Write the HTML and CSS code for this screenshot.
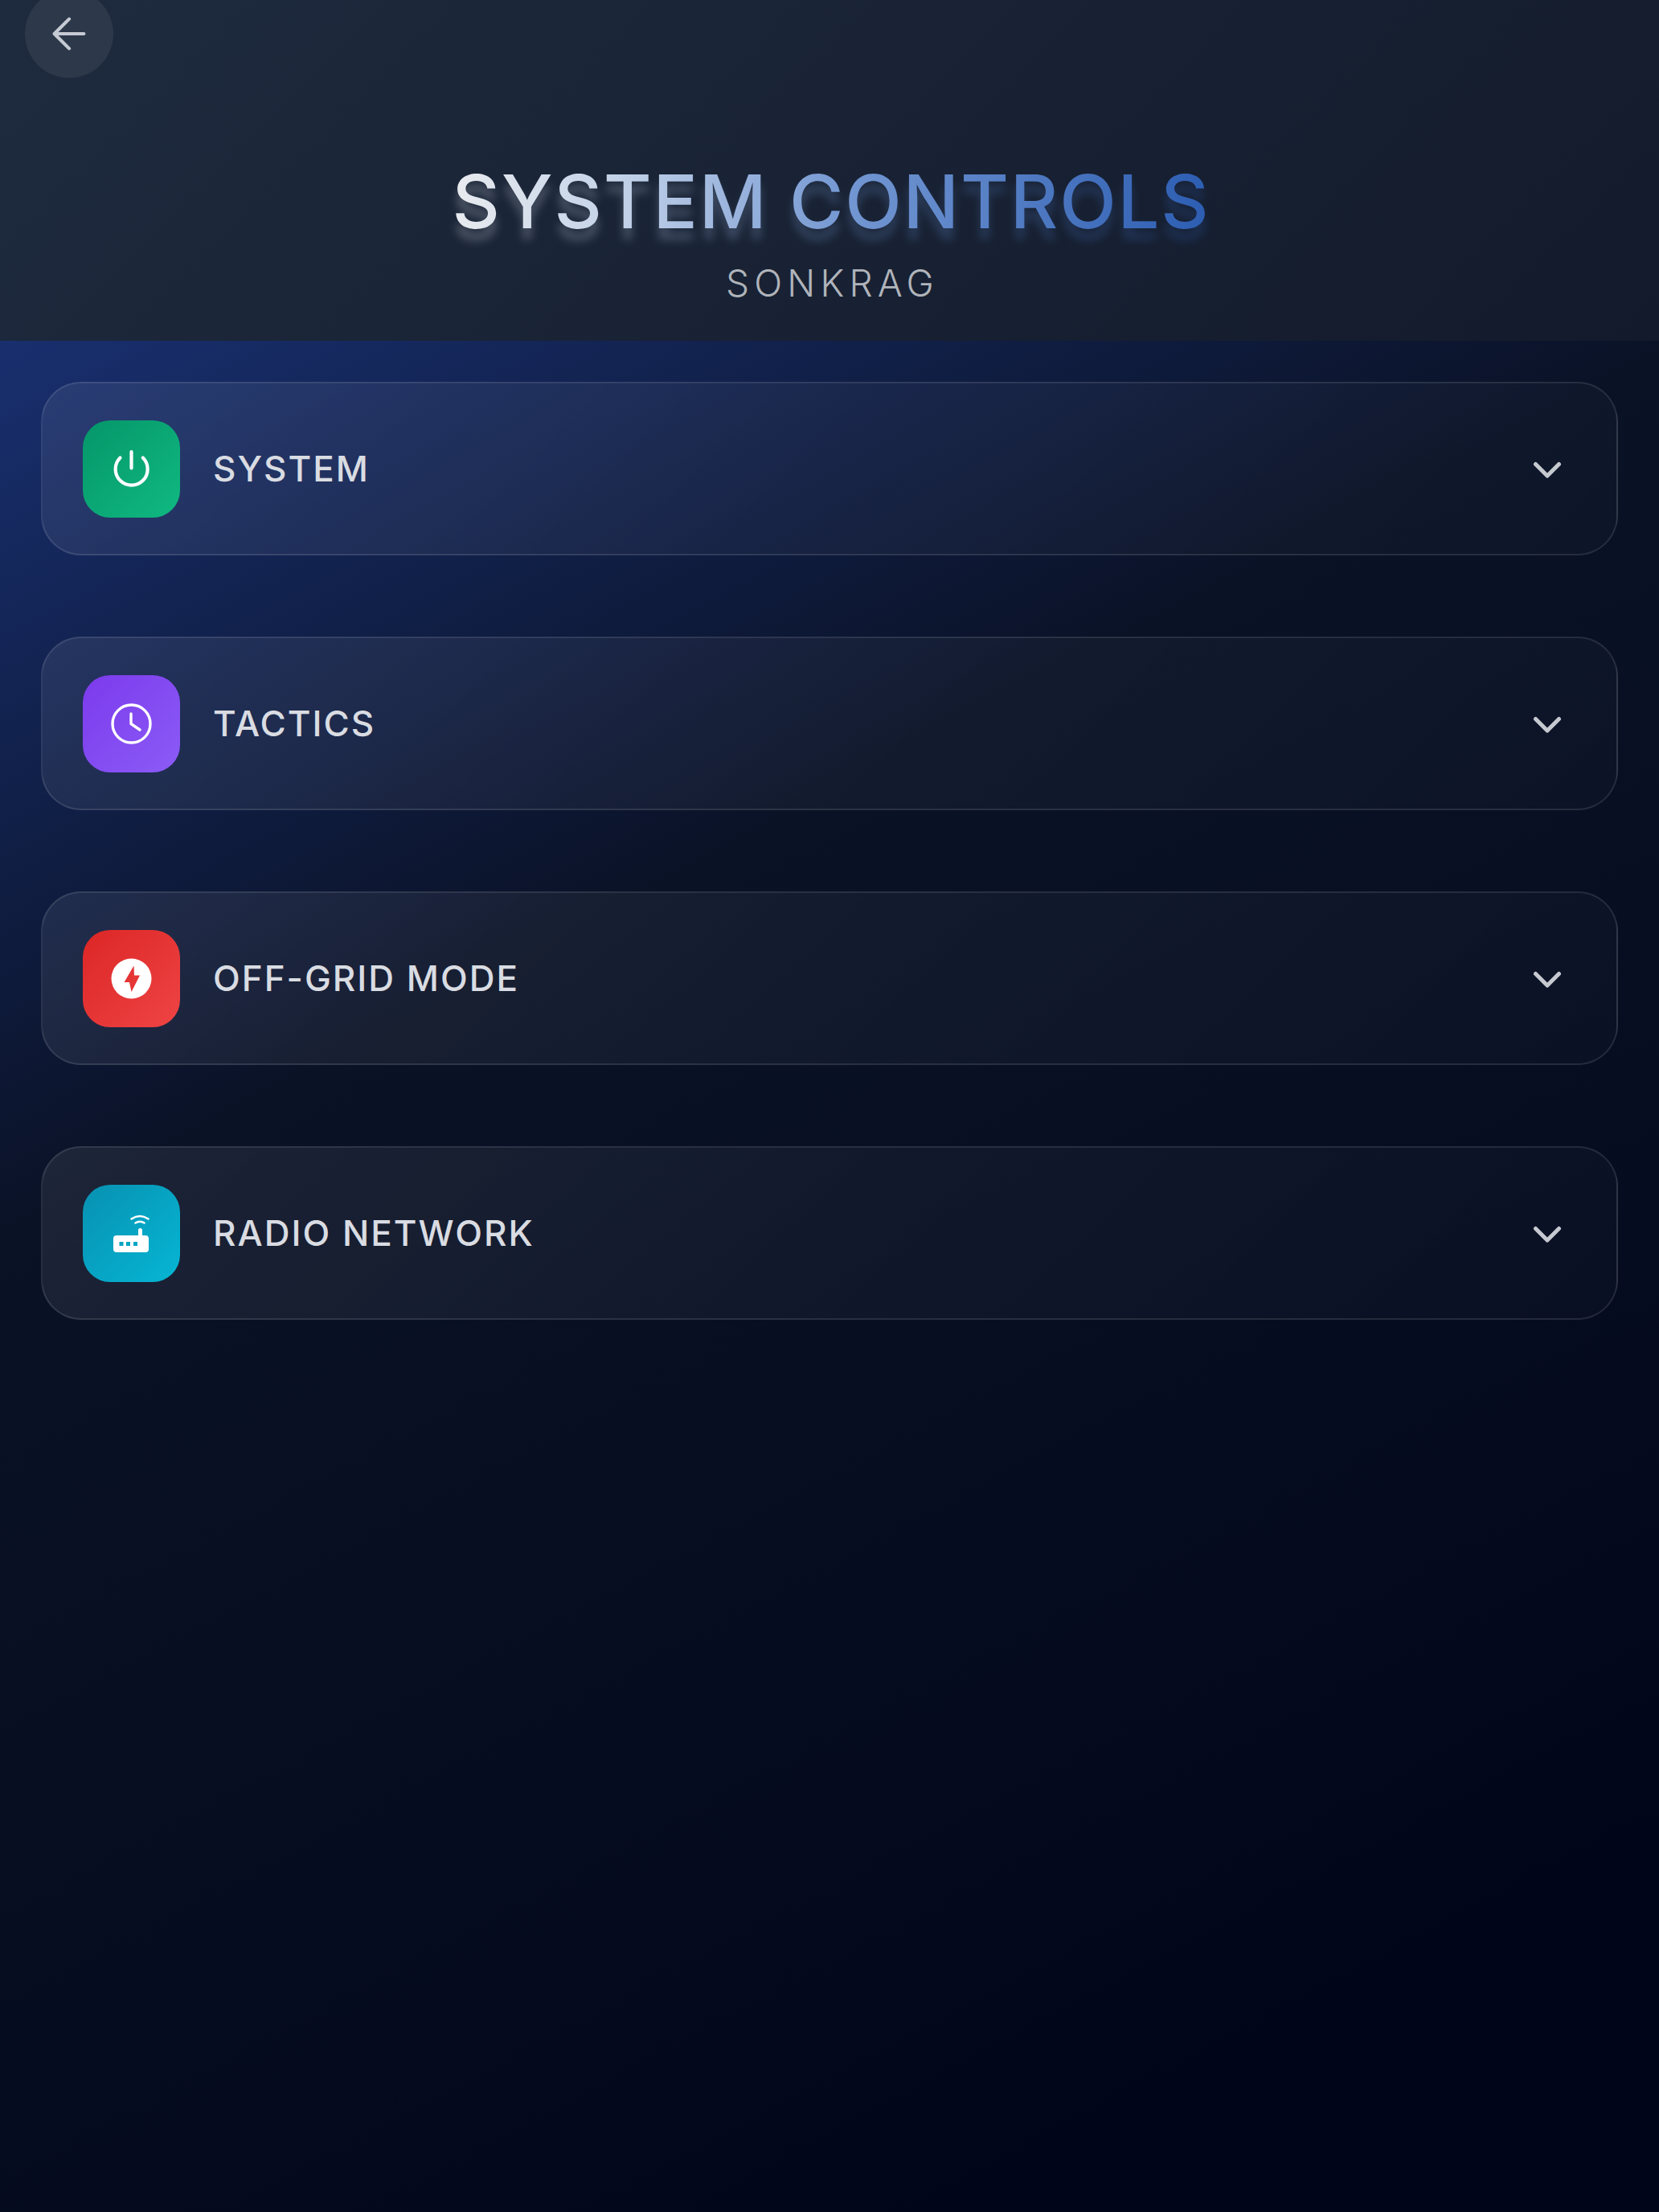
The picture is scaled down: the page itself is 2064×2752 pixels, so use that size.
FILE: index.html
```html
<!DOCTYPE html>
<html lang="en">
<head>
<meta charset="utf-8">
<title>System Controls</title>
<link rel="stylesheet" href="styles.css">
</head>
<body>
<div class="page">
  <header class="header">
    <button class="back" aria-label="Back">
      <svg viewBox="0 0 40 40" class="back-icon"><path d="M37.5 20H2.5M20 2.500 2.500 20 20 37.5"/></svg>
    </button>
    <h1 class="title" data-text="SYSTEM CONTROLS"><span class="title-text">SYSTEM CONTROLS</span></h1>
    <p class="subtitle">SONKRAG</p>
  </header>
  <main class="list">
    <section class="card">
      <div class="tile tile-green">
        <svg viewBox="0 0 121 121" class="glyph"><path class="line" d="M74.800 46.500a20 20 0 1 1-28.300 0M60.500 39V59.500"/></svg>
      </div>
      <span class="label">SYSTEM</span>
      <svg viewBox="0 0 36 22" class="chevron"><path d="M3.500 3.500 18 18 32.500 3.500"/></svg>
    </section>
    <section class="card">
      <div class="tile tile-purple">
        <svg viewBox="0 0 121 121" class="glyph"><circle class="line thin" cx="60.500" cy="60.500" r="23.500"/><path class="line thin" d="M60 48V60.500L71 68"/></svg>
      </div>
      <span class="label">TACTICS</span>
      <svg viewBox="0 0 36 22" class="chevron"><path d="M3.500 3.500 18 18 32.500 3.500"/></svg>
    </section>
    <section class="card">
      <div class="tile tile-red">
        <svg viewBox="0 0 121 121" class="glyph"><path class="solid" fill-rule="evenodd" d="M60.500 35.500a25 25 0 1 0 0 50 25 25 0 0 0 0-50ZM63.500 44.500 51.500 65H58L60.500 77 71 56.500H64Z"/></svg>
      </div>
      <span class="label">OFF-GRID MODE</span>
      <svg viewBox="0 0 36 22" class="chevron"><path d="M3.500 3.500 18 18 32.500 3.500"/></svg>
    </section>
    <section class="card">
      <div class="tile tile-cyan">
        <svg viewBox="0 0 121 121" class="glyph">
          <path class="solid" fill-rule="evenodd" d="M42 63H69V56.500a2.500 2.500 0 0 1 5 0V63H78a4 4 0 0 1 4 4V80a4 4 0 0 1-4 4H42a4 4 0 0 1-4-4V67a4 4 0 0 1 4-4ZM45.500 71v5h5v-5ZM54 71v5h5v-5ZM63 71v5h5v-5Z"/>
          <path class="wave" d="M60.500 42.500Q71 35.500 81.500 42.500"/>
          <path class="wave" d="M65.500 47.500Q71 44 76.500 47.500"/>
        </svg>
      </div>
      <span class="label">RADIO NETWORK</span>
      <svg viewBox="0 0 36 22" class="chevron"><path d="M3.500 3.500 18 18 32.500 3.500"/></svg>
    </section>
  </main>
</div>
</body>
</html>
```
FILE: styles.css
```css
* { box-sizing: border-box; }
html, body { margin: 0; padding: 0; }
body { font-family: "Inter", "Liberation Sans", sans-serif; background: #01051a; }
.page {
  width: 2064px; height: 2752px; overflow: hidden;
  background: linear-gradient(152deg, #1e3a8a 0%, #0a1226 40%, #060c20 68%, #01051a 88%, #01051a 100%);
}
.header {
  height: 424px; display: flex; flex-direction: column; align-items: center;
  background: linear-gradient(135deg, #1e2b3e 0%, #131a2b 100%);
}
.back {
  align-self: flex-start; width: 110px; height: 110px; margin: -13px 0 0 31px; padding: 0;
  border: 0; border-radius: 50%; background: rgba(255,255,255,.07);
  display: flex; align-items: center; justify-content: center;
}
.back-icon { width: 42px; height: 42px; fill: none; stroke: #c6cad2; stroke-width: 4; stroke-linecap: round; stroke-linejoin: round; }
.title {
  position: relative; margin: 98px 0 0; padding-left: 4px; font-size: 92px; line-height: 112px; font-weight: 500; letter-spacing: 1.800px;
  white-space: nowrap;
}
.title-text, .title::after {
  background: linear-gradient(90deg, #e9ebef 0%, #c3d2e8 22%, #7397d2 52%, #2c5db2 100%);
  -webkit-background-clip: text; background-clip: text; color: transparent;
}
.title-text { position: relative; z-index: 1; display: block; }
.title::after {
  content: attr(data-text); position: absolute; left: 4px; top: 14px; white-space: nowrap;
  filter: blur(6px); opacity: .28;
}
.subtitle {
  margin: 17px 0 0; padding-left: 7px; font-size: 46px; line-height: 56px; font-weight: 300; letter-spacing: 6.200px; color: #b0b4bb;
}
.list { display: flex; flex-direction: column; gap: 101px; padding: 51px 51px 0; }
.card {
  height: 216px; display: flex; align-items: center; padding: 0 68px 0 50px;
  border: 2px solid rgba(255,255,255,.10); border-radius: 50px;
  background: linear-gradient(135deg, rgba(255,255,255,.08) 0%, rgba(255,255,255,.04) 50%, rgba(255,255,255,.018) 100%);
}
.tile { width: 121px; height: 121px; border-radius: 34px; flex: none; }
.tile-green { background: linear-gradient(135deg, #059669, #10b981); }
.tile-purple { background: linear-gradient(135deg, #7c3aed, #8b5cf6); }
.tile-red { background: linear-gradient(135deg, #dc2626, #ef4444); }
.tile-cyan { background: linear-gradient(135deg, #0891b2, #06b6d4); }
.glyph { display: block; width: 100%; height: 100%; }
.line { fill: none; stroke: #fff; stroke-width: 4.200; stroke-linecap: round; stroke-linejoin: round; }
.line.thin { stroke-width: 3.400; }
.solid { fill: #fff; }
.wave { fill: none; stroke: #fff; stroke-width: 2.500; stroke-linecap: round; }
.label {
  margin-left: 41px; flex: 1; font-size: 44px; line-height: 54px; font-weight: 500; letter-spacing: 2px; color: #d9dce2;
}
.chevron { width: 36px; height: 22px; flex: none; margin-top: 3px; fill: none; stroke: #c6cad0; stroke-width: 5; stroke-linecap: round; stroke-linejoin: round; }
```
